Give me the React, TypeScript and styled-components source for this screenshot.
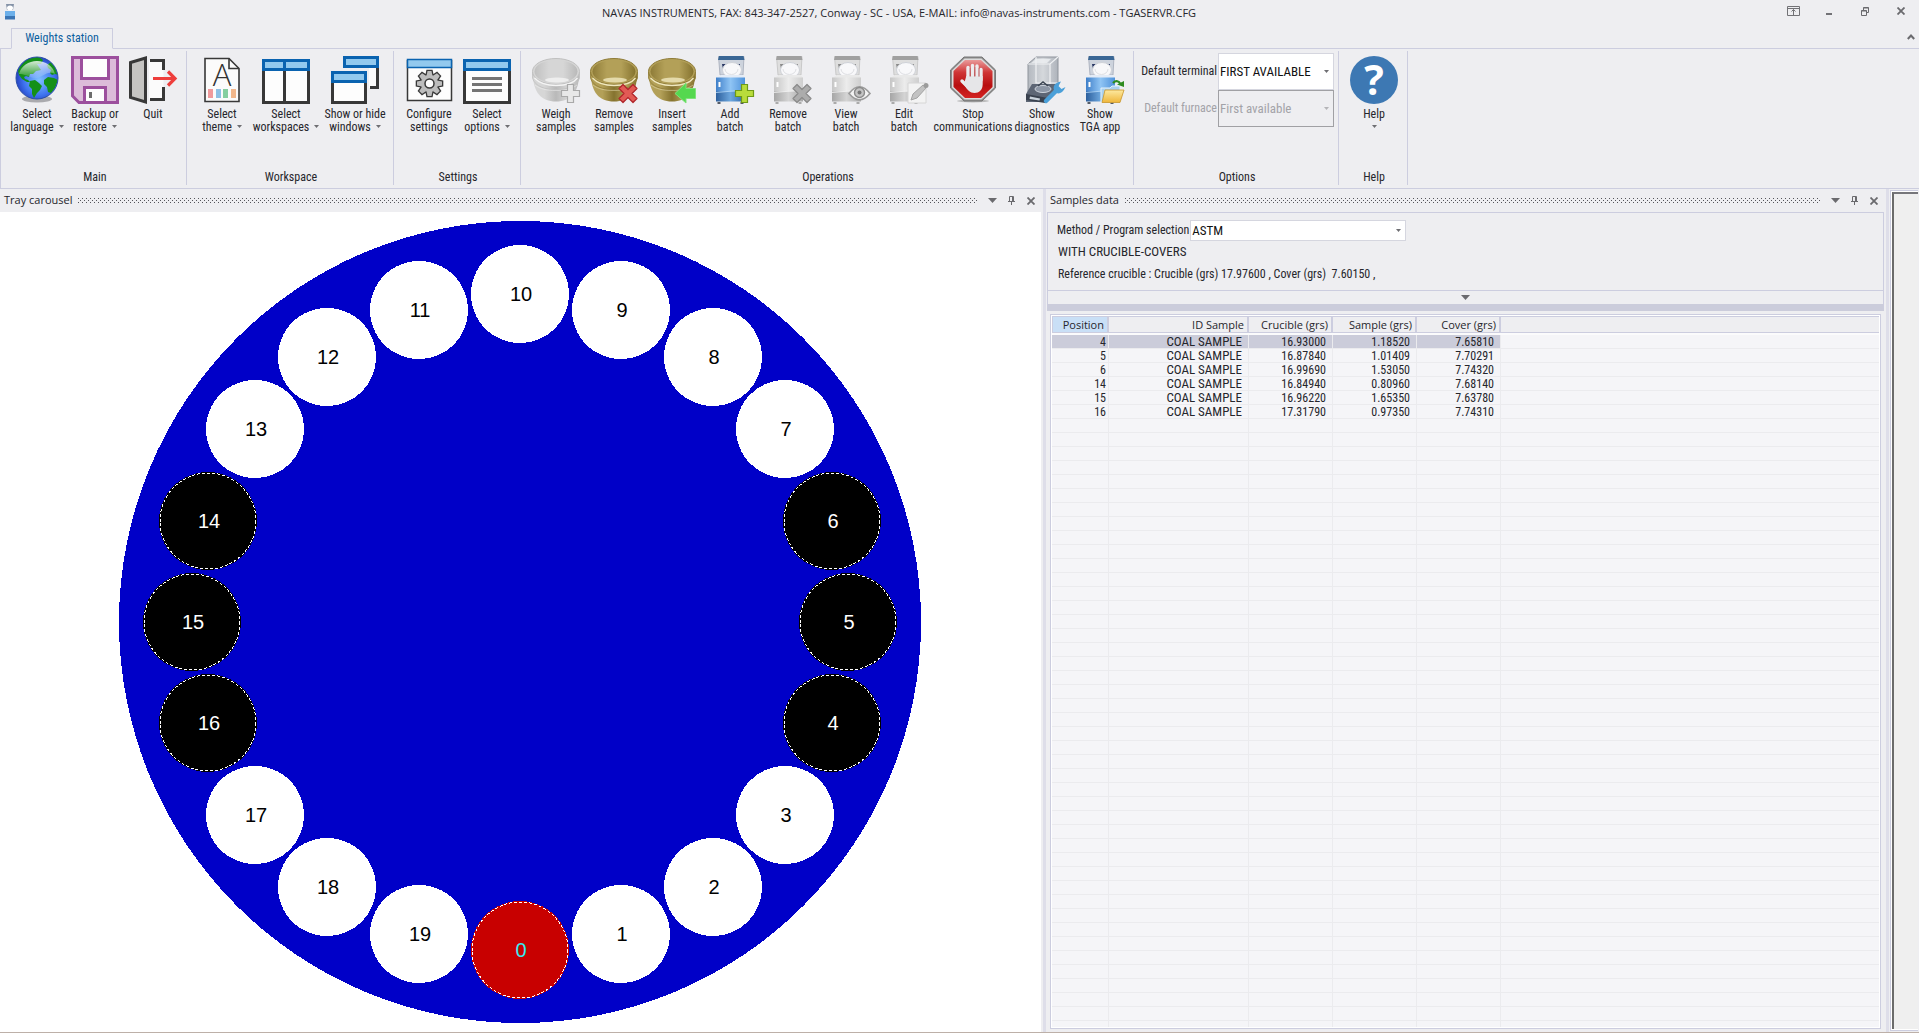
import React from 'react';
import styled, { createGlobalStyle, css } from 'styled-components';

const face = '#eeeef1';
const line = '#cccddf';
const ui = '"Roboto Condensed", "Liberation Sans Narrow", Roboto, sans-serif';
const caption = '"Open Sans", "Noto Sans", sans-serif';

const Global = createGlobalStyle`
  *, *::before, *::after { box-sizing: border-box; }
  body { margin: 0; background: ${face}; color: #26262c; font: 12px/13px ${ui}; }
  button, select { font: inherit; color: inherit; }
  button { border: 0; padding: 0; background: none; }
`;

/* ---------- frame ---------- */

const Window = styled.div`
  display: flex;
  flex-direction: column;
  height: 100vh;
  border-bottom: 1px solid #bdb0a8;
  overflow: hidden;
`;

const TitleBar = styled.header`
  display: flex;
  align-items: flex-start;
  height: 28px;
  padding-left: 5px;
`;

const AppMark = styled.svg`
  width: 10px;
  height: 16px;
  margin-top: 4px;
`;

const Title = styled.h1`
  flex: 1;
  margin: 0;
  padding-left: 8px;
  text-align: center;
  font: 11px/26px ${caption};
  white-space: nowrap;
`;

const CaptionButton = styled.button`
  display: grid;
  place-items: center;
  width: 36px;
  height: 22px;
`;

const TabRow = styled.nav`
  display: flex;
  align-items: flex-end;
  justify-content: space-between;
  height: 21px;
  padding: 0 2px 0 11px;
  box-shadow: inset 0 -1px ${line};
`;

const Tab = styled.button`
  height: 21px;
  width: 102px;
  border: 1px solid ${line};
  border-bottom-color: ${face};
  background: ${face};
  color: #0c5e9f;
`;

const CollapseButton = styled.button`
  display: grid;
  place-items: center;
  width: 12px;
  height: 20px;
  margin-bottom: 2px;
`;

/* ---------- ribbon ---------- */

const Ribbon = styled.section`
  display: flex;
  padding: 2px 0 3px 1px;
  border-left: 1px solid ${line};
  border-bottom: 1px solid ${line};
`;

const Group = styled.section`
  display: flex;
  flex-direction: column;
  height: 134px;
  padding: 0 4px 0 6px;
  border-right: 1px solid ${line};
`;

const GroupTools = styled.div`
  display: flex;
  flex: 1;
  align-items: flex-start;
`;

const GroupTitle = styled.h2`
  margin: 0;
  font: 12px/16px ${ui};
  text-align: center;
`;

const Tool = styled.button<{ $width?: number }>`
  display: flex;
  flex-direction: column;
  align-items: center;
  width: ${(p) => p.$width ?? 58}px;
  padding-top: 5px;
  white-space: nowrap;
`;

const Glyph = styled.svg`
  display: block;
  width: 48px;
  height: 48px;
  margin-bottom: 4px;
  overflow: visible;
`;

const Caret = styled.svg<{ $faded?: boolean; $below?: boolean }>`
  width: 5px;
  height: 3px;
  margin: ${(p) => (p.$below ? '4px 0 0' : '0 0 3px 5px')};
  fill: ${(p) => (p.$faded ? '#b4b4b8' : '#6e6e72')};
`;

const LabelLine = styled.span`
  display: block;
  height: 13px;
`;

const Fields = styled.div`
  padding-top: 2px;
`;

const Field = styled.div<{ $off?: boolean }>`
  display: flex;
  align-items: center;
  gap: 1px;
  color: ${(p) => (p.$off ? '#a3a3a8' : 'inherit')};
`;

const FieldLabel = styled.label`
  width: 77px;
  text-align: right;
  white-space: nowrap;
`;

const SelectBox = styled.div<{ $width: number }>`
  position: relative;
  width: ${(p) => p.$width}px;

  & > svg {
    position: absolute;
    right: 5px;
    top: 50%;
    margin: -2px 0 0;
    pointer-events: none;
  }
`;

const Select = styled.select<{ $height: number }>`
  display: block;
  width: 100%;
  height: ${(p) => p.$height}px;
  padding: 0 16px 0 1px;
  appearance: none;
  border: 1px solid #d5d6df;
  border-radius: 0;
  background: #fff;
  color: #111;
  font-size: 13px;

  &:disabled {
    border-color: #a0a0a4;
    background: ${face};
    color: #a3a3a8;
    opacity: 1;
  }
`;

/* ---------- docked panes ---------- */

const Docks = styled.main`
  flex: 1;
  min-height: 0;
  display: grid;
  grid-template-columns: 1043fr 3px 840fr 3px 30px;
`;

const Splitter = styled.div`
  background: #dedee9;
`;

const Pane = styled.section`
  display: flex;
  flex-direction: column;
  min-width: 0;
  min-height: 0;
`;

const PaneHeader = styled.header`
  display: flex;
  align-items: center;
  height: 23px;
  padding: 0 3px 0 4px;
`;

const PaneTitle = styled.h2`
  align-self: flex-start;
  margin: 0 6px 0 0;
  font: 11px/22px ${caption};
  white-space: nowrap;
`;

const dot = (x: number, y: number) =>
  `conic-gradient(at 1px 1px, transparent 270deg, #55555a 0) ${x}px ${y}px / 4px 4px`;

const Grip = styled.div`
  flex: 1;
  height: 5px;
  margin-right: 5px;
  background: ${dot(0, 0)}, ${dot(2, 2)};
`;

const PaneButton = styled.button`
  display: grid;
  place-items: center;
  width: 19px;
  height: 19px;
`;

const Canvas = styled.div`
  flex: 1;
  min-height: 0;
  margin-right: 2px;
  background: #fff;

  & > svg {
    display: block;
    width: 100%;
    height: 100%;
  }
`;

const disc = { empty: '#fff', loaded: '#000', home: '#c80000' };
const ink = { empty: '#000', loaded: '#fff', home: '#34ecf0' };
type SlotKind = keyof typeof disc;

const Plate = styled.circle`
  fill: #0000c8;
  shape-rendering: crispEdges;
`;

const Disc = styled.circle<{ $kind: SlotKind }>`
  fill: ${(p) => disc[p.$kind]};
  shape-rendering: crispEdges;
`;

const Rim = styled.circle`
  fill: none;
  stroke: #fff;
  stroke-dasharray: 3 2;
  shape-rendering: crispEdges;
`;

const SlotNumber = styled.text<{ $kind: SlotKind }>`
  fill: ${(p) => ink[p.$kind]};
  font: 20px "Liberation Sans", Arial, sans-serif;
  text-anchor: middle;
`;

/* ---------- samples ---------- */

const SamplesBody = styled.div`
  display: flex;
  flex-direction: column;
  flex: 1;
  min-height: 0;
  margin: 0 2px 0 1px;
`;

const MethodBox = styled.div`
  height: 79px;
  padding: 7px 9px 0;
  border: 1px solid ${line};
`;

const MethodRow = styled.div`
  display: flex;
  align-items: center;
  gap: 1px;
`;

const Note = styled.p<{ $large?: boolean }>`
  margin: 0;
  padding-left: 1px;
  line-height: 22px;
  white-space: pre;
  ${(p) => p.$large && css`font-size: 13px;`}
`;

const FoldBar = styled.button`
  display: grid;
  place-items: center;
  height: 20px;
  border: 1px solid ${line};
  border-top: 0;
  border-bottom: 7px solid #cbccdb;
`;

const Sheet = styled.div`
  flex: 1;
  min-height: 0;
  margin: 3px;
  padding: 1px;
  border: 1px solid ${line};
  background: #fff;
`;

const columns = [57, 140, 84, 84, 84];
const rule = (at: number) => `linear-gradient(#ebebee, #ebebee) ${at}px 17px / 1px 100% no-repeat`;
const rules = columns.map((_, i) => rule(columns.slice(0, i + 1).reduce((a, b) => a + b) - 1));

const GridArea = styled.div`
  height: 100%;
  background:
    ${rules.join(', ')},
    repeating-linear-gradient(transparent 0 13px, #ebebee 13px 14px) 0 19px no-repeat,
    #f5f5f8;
`;

const Grid = styled.table`
  width: 100%;
  table-layout: fixed;
  border-collapse: separate;
  border-spacing: 0;
`;

const Head = styled.th<{ $width?: number; $sorted?: boolean }>`
  width: ${(p) => (p.$width ? `${p.$width}px` : 'auto')};
  height: 17px;
  padding: 0 3px 0 0;
  border: 1px solid ${line};
  border-left: 0;
  border-right-width: ${(p) => (p.$width ? 2 : 0)}px;
  background: ${(p) => (p.$sorted ? '#c9dff6' : face)};
  font: 11px/15px ${caption};
  text-align: right;
  white-space: nowrap;

  &:first-child { border-left: 1px solid ${line}; }
`;

const Gap = styled.td`
  height: 2px;
  padding: 0;
  background: #fbfbfc;
`;

const Cell = styled.td<{ $text?: boolean }>`
  height: 14px;
  padding: 1px 6px 0 0;
  border-right: 1px solid #ebebee;
  border-bottom: 1px solid #ebebee;
  font-size: ${(p) => (p.$text ? 13 : 12)}px;
  line-height: 12px;
  text-align: right;
  white-space: nowrap;

  &:first-child { padding-right: 2px; }
`;

const Row = styled.tr<{ $selected: boolean }>`
  ${Cell} { background: ${(p) => (p.$selected ? '#cbccda' : 'transparent')}; }
`;

const EmptyDock = styled.aside`
  margin: 1px;
  border: 1px solid ${line};
  border-right: 0;
  padding: 1px 0 1px 1px;
  background: #fff;

  &::before {
    content: '';
    display: block;
    height: 100%;
    border: 2px solid #6b6b6b;
    border-top-color: #76767a;
    border-right: 0;
    border-bottom: 0;
    background: #efefef;
  }
`;

/* ---------- drawings ---------- */

const Gradient = ({ id, stops, flat }: { id: string; stops: string[]; flat?: boolean }) => (
  <linearGradient id={id} x1="0" y1="0" x2={flat ? 1 : 0} y2={flat ? 0 : 1}>
    {stops.map((c, i) => (
      <stop key={i} offset={i / (stops.length - 1)} stopColor={c} />
    ))}
  </linearGradient>
);

const GlobeArt = () => (
  <>
    <defs>
      <radialGradient id="sea" cx="0.55" cy="0.55" r="0.6">
        <stop offset="0" stopColor="#7fc0ff" />
        <stop offset="0.6" stopColor="#3f74f0" />
        <stop offset="1" stopColor="#1f35b4" />
      </radialGradient>
      <Gradient id="gloss" stops={['#ffffffd0', '#ffffff10']} />
      <clipPath id="ball"><circle cx="24" cy="22" r="20.5" /></clipPath>
    </defs>
    <ellipse cx="24" cy="43" rx="15" ry="3.5" fill="#8d8d92" opacity="0.7" />
    <circle cx="24" cy="22" r="21" fill="url(#sea)" stroke="#2a4ea8" />
    <g clipPath="url(#ball)" fill="#149018">
      <path d="M7 11l5-6 7-4 7 0 4 3-2 4-4 0 2 3 2 3-5 1-3 3-3 0-1 3-3-1-2 1 1 2 3 1 2 2-3 0-5-3-3-4-1-4z" />
      <path d="M17 25l5-1 4 3 3 3-2 4-3 3-3 5-2-4 0-5-3-3z" />
      <path d="M34 9l4-3 6 6 2 7-4-1-3 1-2-2 1-3-3-2z" />
      <path d="M31 24l4-3 6 1 4 2-3 8-4 5-3-1-1-5-3-3z" />
    </g>
    <path d="M6 18a18.5 17 0 0 1 36 0c-8-5-14 6-22 4-6-2-9-4-14-4z" fill="url(#gloss)" />
  </>
);

const FloppyArt = () => (
  <>
    <path d="M1.5 1.5H46.5V46.5H8L1.5 40z" fill="#dcbcd9" stroke="#9c4f9d" strokeWidth="3" />
    <path d="M10.5 1.5H37.5V22.5H10.5z" fill="#fdfdfd" stroke="#9c4f9d" strokeWidth="3" />
    <path d="M13.5 46.5V31.5H34.5V46.5z" fill="#fdfdfd" stroke="#9c4f9d" strokeWidth="3" />
    <path d="M18 36h3v6h-3z" fill="#6b6b6b" />
  </>
);

const ExitArt = () => (
  <>
    <path d="M20 4.5H34.5V43.5H20z" fill="#fbfbfb" />
    <path d="M21 4.5H34.5V14M34.5 31V43.5H21" fill="none" stroke="#383838" strokeWidth="3" />
    <path d="M1.5 6.5L16.5 2V46L1.5 41.5z" fill="#c5c4c2" stroke="#383838" strokeWidth="3" />
    <path d="M24 22.5H45M39 15.5L46 22.5L39 29.5" fill="none" stroke="#ee3e3c" strokeWidth="3.2" />
  </>
);

const ThemeArt = () => (
  <>
    <path d="M7 2.5H31L41 12.5V45.5H7z" fill="#fbfbfb" stroke="#383838" strokeWidth="1.6" />
    <path d="M31 2.5V12.5H41" fill="none" stroke="#383838" strokeWidth="1.6" />
    <text x="24" y="30" fontSize="31" fontWeight="300" fontFamily="Open Sans, Roboto, sans-serif" textAnchor="middle" fill="#333">A</text>
    <path d="M10 33h5v9h-5z" fill="#f09a9c" />
    <path d="M18 33h5v9h-5z" fill="#8dc0e4" />
    <path d="M25 33h5v9h-5z" fill="#85cfa0" />
    <path d="M33 33h5v9h-5z" fill="#f2b78b" />
  </>
);

const WorkspaceArt = () => (
  <>
    <path d="M1.5 13V46.5H46.5V13M22.5 13V46.5" fill="#fdfdfd" stroke="#383838" strokeWidth="3" />
    <path d="M1.5 4.5H46.5V13.5H1.5zM22.5 4.5V13.5" fill="#92c9ee" stroke="#0a63b0" strokeWidth="3" />
  </>
);

const WindowsArt = () => (
  <>
    <path d="M38 12H45V32H38z" fill="#fbfbfb" />
    <path d="M46.5 12V31.5H39" fill="none" stroke="#383838" strokeWidth="3" />
    <path d="M13.5 1.5H46.5V10.5H13.5z" fill="#92c9ee" stroke="#0a63b0" strokeWidth="3" />
    <path d="M1.5 25V46.5H34.5V25" fill="#fdfdfd" stroke="#383838" strokeWidth="3" />
    <path d="M1.5 16.5H34.5V25.5H1.5z" fill="#92c9ee" stroke="#0a63b0" strokeWidth="3" />
  </>
);

const teeth = [0, 45, 90, 135, 180, 225, 270, 315];

const GearShape = () => (
  <>
    {teeth.map((a) => (
      <path key={a} d="M21.5 20l1-5h4l1 5z" transform={`rotate(${a} 24.5 27.5)`} />
    ))}
    <circle cx="24.5" cy="27.5" r="8.5" />
  </>
);

const ConfigureArt = () => (
  <>
    <path d="M2.5 4V44.5H46.5V4" fill="#fdfdfd" stroke="#383838" strokeWidth="1.5" />
    <path d="M2.5 3.5H46.5V11.5H2.5z" fill="#92c9ee" stroke="#0a63b0" strokeWidth="1.5" />
    <g fill="#bdbdbd" stroke="#383838" strokeWidth="2.6"><GearShape /></g>
    <g fill="#bdbdbd"><GearShape /></g>
    <circle cx="24.5" cy="27.5" r="4.5" fill="#fdfdfd" stroke="#383838" strokeWidth="1.5" />
  </>
);

const ListArt = () => (
  <>
    <path d="M1.5 13V46.5H46.5V13" fill="#fdfdfd" stroke="#383838" strokeWidth="3" />
    <path d="M1.5 4.5H46.5V13.5H1.5z" fill="#92c9ee" stroke="#0a63b0" strokeWidth="3" />
    <path d="M9 22.5H39M9 28.5H39M9 34.5H39" stroke="#747474" strokeWidth="2.8" />
  </>
);

const Crucible = ({ gray }: { gray?: boolean }) => {
  const id = gray ? 'potGray' : 'potGold';
  const c = gray
    ? { edge: '#c0c0c0', dark: '#b9b9b9', mid: '#d6d6d6', hi: '#f4f4f4' }
    : { edge: '#8f7c38', dark: '#85732f', mid: '#b3a058', hi: '#f0e8bf' };
  return (
    <>
      <defs>
        <Gradient id={id} flat stops={[c.mid, c.mid, c.dark, c.mid, c.dark]} />
        <Gradient id={`${id}In`} flat stops={[c.edge, c.mid, c.mid, c.dark]} />
      </defs>
      <path d="M1 18C1 36 9 45.5 24 45.5S47 36 47 18z" fill={`url(#${id})`} />
      <path d="M.5 16v6C3 31 14 33.5 24 33.5S45 31 47.5 22v-6z" fill={`url(#${id})`} stroke={c.edge} strokeWidth=".8" />
      <ellipse cx="24" cy="15.5" rx="23.5" ry="13" fill={c.mid} stroke={c.edge} />
      <ellipse cx="24" cy="15.5" rx="21.5" ry="11.5" fill={`url(#${id}In)`} />
      <ellipse cx="25" cy="24" rx="12" ry="2.5" fill={c.hi} opacity=".8" />
      <path d="M2.5 22C8 28 15 29.5 24 29.5S41 28 45.5 22" fill="none" stroke={c.hi} strokeWidth="1.3" />
      <path d="M3 29C8 33 15 34.5 24 34.5S40 33 45 29" fill="none" stroke={c.hi} strokeWidth=".8" opacity=".6" />
    </>
  );
};

const Plus = ({ fill, edge }: { fill: string; edge: string }) => (
  <path d="M35.5 28.5h6v6h6v6h-6v6h-6v-6h-6v-6h6z" fill={fill} stroke={edge} strokeWidth="1.2" />
);

const Cross = ({ fill, edge }: { fill: string; edge: string }) => (
  <path d="M33 28.5l5 5 5-5 4 4-5 5 5 5-4 4-5-5-5 5-4-4 5-5-5-5z" fill={fill} stroke={edge} strokeWidth="1.2" strokeLinejoin="round" />
);

const WeighArt = () => <><Crucible gray /><Plus fill="#e8e8e8" edge="#a9a9a9" /></>;
const RemoveArt = () => <><Crucible /><Cross fill="#e25a55" edge="#b0252a" /></>;
const InsertArt = () => (
  <>
    <Crucible />
    <path d="M27 37.5L38 27v5.5h9.5v10H38V47z" fill="#55d84f" stroke="#7fe27b" strokeWidth="1" />
  </>
);

const Furnace = ({ gray }: { gray?: boolean }) => {
  const id = gray ? 'fGray' : 'fBlue';
  return (
    <>
      <defs>
        <Gradient id={id} flat stops={gray ? ['#c6c6c6', '#ececec', '#cecece'] : ['#3f7fc9', '#8fc4f4', '#4f92da']} />
        <Gradient id={`${id}Low`} flat stops={gray ? ['#a6a6a6', '#d4d4d4', '#a8a8a8'] : ['#2c5f9d', '#6da7de', '#2e66a8']} />
      </defs>
      <path d="M12.5 .5H38L37 19H14z" fill={gray ? '#dedede' : '#cdd3dd'} stroke={gray ? '#c2c2c2' : '#a3a9b8'} strokeWidth=".8" />
      <path d="M13 0H37.5L38.5 4H12z" fill={gray ? '#a0a0a0' : '#3a6795'} />
      <path d="M16 8h18l-1.5 8h-15z" fill={gray ? '#8c8c8c' : '#2c3a66'} />
      <ellipse cx="26" cy="14" rx="9.5" ry="7.5" fill="#f8f8fa" stroke="#cfd2d8" />
      <path d="M19 13a6.5 5.5 0 1 0 13 0" fill="none" stroke="#dedfe3" />
      <path d="M10 22L15 19H37L39 22z" fill={gray ? '#e9e9e9' : '#e3ebf6'} />
      <path d="M10 21.5H39V36H10z" fill={`url(#${id})`} />
      <path d="M10 35.5H39V45.5H10z" fill={`url(#${id}Low)`} />
      <path d="M10 36.5L39 34" stroke={gray ? '#f4f4f4' : '#b8dbfa'} strokeWidth=".8" />
      <path d="M12.5 26h2v5h-2z" fill="#fff" />
      <path d="M11.5 46h3v2h-3zM34.5 46h3v2h-3z" fill={gray ? '#aaa' : '#555b66'} />
    </>
  );
};

const AddBatchArt = () => <><Furnace /><Plus fill="#b9dc3c" edge="#6f9a16" /></>;
const RemoveBatchArt = () => <><Furnace gray /><Cross fill="#acacac" edge="#8a8a8a" /></>;
const ViewBatchArt = () => (
  <>
    <Furnace gray />
    <path d="M27 37.5Q37.5 24 48 37.5Q37.5 50 27 37.5z" fill="#f4f4f4" stroke="#9b9b9b" strokeWidth="1.6" />
    <circle cx="37.5" cy="36.5" r="5" fill="#c4c4c4" stroke="#8b8b8b" strokeWidth="1.4" />
    <circle cx="37.5" cy="36.5" r="2" fill="#777" />
  </>
);
const EditBatchArt = () => (
  <>
    <Furnace gray />
    <path d="M28 27H46V47H28z" fill="#f3f3f3" stroke="#d6d6d6" />
    <path d="M31 44l2-6 10-9 3 3-9 10z" fill="#c2c2c2" stroke="#a3a3a3" />
    <circle cx="46" cy="29.5" r="2.5" fill="#9b9b9b" />
  </>
);

const StopArt = () => (
  <>
    <defs><Gradient id="stop" stops={['#e99a9a', '#cf3535', '#b80f10', '#d32322']} /></defs>
    <ellipse cx="24" cy="45" rx="16" ry="1.5" fill="#999" opacity=".6" />
    <path d="M15 1H33L46.5 14V32L33 45H15L1.5 32V14z" fill="#8c8c8c" stroke="#777" />
    <path d="M15.5 2.5H32.5L45 14.5V31.5L32.5 43.5H15.5L3 31.5V14.5z" fill="#dcdcdc" />
    <path d="M16 4H32L43.5 15V31L32 42H16L4.5 31V15z" fill="url(#stop)" />
    <path
      d="M19 24V11.5M23.5 22V9.5M28 22V10M32 24V13.5M19 31L13 25"
      fill="none"
      stroke="#ececee"
      strokeWidth="3.4"
      strokeLinecap="round"
    />
    <path d="M17.3 20H33.7V28C33.7 34 30 37 25.5 37S18 34 15 28z" fill="#e6e6e8" />
    <path d="M21.2 12v9M25.8 11v10M30 12v9" stroke="#b4686a" strokeWidth=".7" />
  </>
);

const BalanceArt = () => (
  <>
    <defs><Gradient id="glass" flat stops={['#b4b9c0', '#d5d8dc', '#aeb3bb']} /></defs>
    <path d="M10 8L18 1H40V30L33 38H10z" fill="url(#glass)" stroke="#8f949c" />
    <path d="M10 8H32L40 1M32 8V36M18 1V27H40" fill="none" stroke="#f0f2f4" strokeWidth="1.2" />
    <path d="M13 7L18 3H33L29 7z" fill="#eef0f2" opacity=".8" />
    <path d="M8 38L14 28H38L34 40L28 46H8z" fill="#5d6675" />
    <ellipse cx="25" cy="33" rx="8" ry="3.5" fill="#8d97a6" stroke="#cfd5dd" />
    <path d="M20 30L25 26L30 30" fill="none" stroke="#3b4452" strokeWidth="1.5" />
    <path d="M8 38L30 42L27 47L8 44z" fill="#39414e" />
    <path d="M12 40.5L22 42.5L21.5 44.5L11.5 43z" fill="#c9d3dc" />
    <path d="M28 45L39 34" stroke="#4ba0d9" strokeWidth="4.5" strokeLinecap="round" />
    <path d="M43 25.5C37 26 34 31 36.5 35S44 38.5 47.5 31L43.5 33L40.5 30z" fill="#4ba0d9" />
  </>
);

const TgaArt = () => (
  <>
    <defs><Gradient id="folder" stops={['#fde9a0', '#efb63a']} /></defs>
    <Furnace />
    <path d="M25 32H34l2-2h8v16H25z" fill="#a9d0ee" stroke="#e3f1fb" />
    <path d="M29 34H48L44 46.5H26z" fill="url(#folder)" stroke="#c9952a" strokeWidth=".8" />
    <path d="M37 27C40 24 43 25 44.5 28" fill="none" stroke="#2e8b1f" strokeWidth="2.2" />
    <path d="M41 28.5L48 25V31z" fill="#2e8b1f" />
  </>
);

const HelpArt = () => (
  <>
    <circle cx="24" cy="24" r="24" fill="#3d78b3" />
    <text x="24" y="39" fontSize="41" fontWeight="700" fontFamily="Open Sans, sans-serif" textAnchor="middle" fill="#fff">?</text>
  </>
);

/* ---------- pieces ---------- */

const Arrow = ({ faded, below }: { faded?: boolean; below?: boolean }) => (
  <Caret $faded={faded} $below={below} viewBox="0 0 5 3" aria-hidden="true"><path d="M0 0H5L2.5 3z" /></Caret>
);

type ToolSpec = { art: () => React.ReactElement; lines: string[]; menu?: boolean; width?: number };

const ToolButton = ({ art: Art, lines, menu, width }: ToolSpec) => (
  <Tool type="button" $width={width}>
    <Glyph viewBox="0 0 48 48" aria-hidden="true"><Art /></Glyph>
    {lines.map((text, i) => (
      <LabelLine key={text}>
        {text}
        {menu && lines.length > 1 && i === lines.length - 1 && <Arrow />}
      </LabelLine>
    ))}
    {menu && lines.length === 1 && <Arrow below />}
  </Tool>
);

const groups: { title: string; tools: ToolSpec[] }[] = [
  {
    title: 'Main',
    tools: [
      { art: GlobeArt, lines: ['Select', 'language'], menu: true },
      { art: FloppyArt, lines: ['Backup or', 'restore'], menu: true },
      { art: ExitArt, lines: ['Quit'] },
    ],
  },
  {
    title: 'Workspace',
    tools: [
      { art: ThemeArt, lines: ['Select', 'theme'], menu: true },
      { art: WorkspaceArt, lines: ['Select', 'workspaces'], menu: true, width: 70 },
      { art: WindowsArt, lines: ['Show or hide', 'windows'], menu: true, width: 68 },
    ],
  },
  {
    title: 'Settings',
    tools: [
      { art: ConfigureArt, lines: ['Configure', 'settings'] },
      { art: ListArt, lines: ['Select', 'options'], menu: true },
    ],
  },
  {
    title: 'Operations',
    tools: [
      { art: WeighArt, lines: ['Weigh', 'samples'] },
      { art: RemoveArt, lines: ['Remove', 'samples'] },
      { art: InsertArt, lines: ['Insert', 'samples'] },
      { art: AddBatchArt, lines: ['Add', 'batch'] },
      { art: RemoveBatchArt, lines: ['Remove', 'batch'] },
      { art: ViewBatchArt, lines: ['View', 'batch'] },
      { art: EditBatchArt, lines: ['Edit', 'batch'] },
      { art: StopArt, lines: ['Stop', 'communications'], width: 80 },
      { art: BalanceArt, lines: ['Show', 'diagnostics'] },
      { art: TgaArt, lines: ['Show', 'TGA app'] },
    ],
  },
];

const RibbonGroup = ({ title, children }: { title: string; children: React.ReactNode }) => (
  <Group>
    <GroupTools>{children}</GroupTools>
    <GroupTitle>{title}</GroupTitle>
  </Group>
);

const CloseMark = () => (
  <svg width="8" height="8" viewBox="0 0 8 8" aria-hidden="true">
    <path d="M.5 .5L7.5 7.5M7.5 .5L.5 7.5" stroke="#6a6a6e" strokeWidth="1.8" />
  </svg>
);

const DownMark = () => (
  <svg width="9" height="5" viewBox="0 0 9 5" aria-hidden="true"><path d="M0 0H9L4.5 5z" fill="#6a6a6e" /></svg>
);

const DockHeader = ({ title }: { title: string }) => (
  <PaneHeader>
    <PaneTitle>{title}</PaneTitle>
    <Grip />
    <PaneButton type="button" aria-label="Pane menu"><DownMark /></PaneButton>
    <PaneButton type="button" aria-label="Auto hide">
      <svg width="7" height="9" viewBox="0 0 7 9" aria-hidden="true">
        <path d="M1.5 5V.5H5.5V5M0 5.5H7M3.5 5.5V9M4.5 0V5" fill="none" stroke="#6a6a6e" />
      </svg>
    </PaneButton>
    <PaneButton type="button" aria-label="Close pane"><CloseMark /></PaneButton>
  </PaneHeader>
);

const loaded = [4, 5, 6, 14, 15, 16];
const slots = Array.from({ length: 20 }, (_, n) => {
  const angle = (n * Math.PI) / 10;
  const kind: SlotKind = n === 0 ? 'home' : loaded.includes(n) ? 'loaded' : 'empty';
  return { n, kind, x: Math.round(328 * Math.sin(angle)), y: Math.round(328 * Math.cos(angle)) };
});

const Carousel = () => (
  <svg viewBox="-520 -410 1041 820" role="img" aria-label="Tray carousel">
    <Plate r="401" />
    {slots.map(({ n, kind, x, y }) => (
      <g key={n} transform={`translate(${x} ${y})`}>
        <Disc r="49" $kind={kind} />
        {kind !== 'empty' && <Rim r="48" />}
        <SlotNumber x="1" y="7" $kind={kind}>{n}</SlotNumber>
      </g>
    ))}
  </svg>
);

const heads = ['Position', 'ID Sample', 'Crucible (grs)', 'Sample (grs)', 'Cover (grs)'];
const samples = [
  ['4', 'COAL SAMPLE', '16.93000', '1.18520', '7.65810'],
  ['5', 'COAL SAMPLE', '16.87840', '1.01409', '7.70291'],
  ['6', 'COAL SAMPLE', '16.99690', '1.53050', '7.74320'],
  ['14', 'COAL SAMPLE', '16.84940', '0.80960', '7.68140'],
  ['15', 'COAL SAMPLE', '16.96220', '1.65350', '7.63780'],
  ['16', 'COAL SAMPLE', '17.31790', '0.97350', '7.74310'],
];

export default function App() {
  return (
    <Window>
      <Global />
      <TitleBar>
        <AppMark viewBox="0 0 10 16" aria-hidden="true">
          <path d="M1 0H9L8 6H2z" fill="#8593a8" />
          <ellipse cx="5" cy="4" rx="3" ry="2.5" fill="#fff" />
          <path d="M0 7H10V15H0z" fill="#6db0ea" />
          <path d="M0 12H10V15.5H0z" fill="#3b75b4" />
        </AppMark>
        <Title>
          NAVAS INSTRUMENTS, FAX: 843-347-2527, Conway - SC - USA, E-MAIL: info@navas-instruments.com - TGASERVR.CFG
        </Title>
        <CaptionButton type="button" aria-label="Ribbon display options">
          <svg width="13" height="10" viewBox="0 0 13 10">
            <path d="M.5 .5H12.5V9.5H.5zM.5 2.5H12.5M6.5 3.5V9M4.5 5.5L6.5 3.5L8.5 5.5" fill="none" stroke="#727276" />
          </svg>
        </CaptionButton>
        <CaptionButton type="button" aria-label="Minimize">
          <svg width="6" height="8" viewBox="0 0 6 8"><path d="M0 6H6V8H0z" fill="#727276" /></svg>
        </CaptionButton>
        <CaptionButton type="button" aria-label="Restore">
          <svg width="8" height="9" viewBox="0 0 8 9">
            <path d="M2.5 3V.5H7.5V5.5H6M2.5 1H7.5M.5 3.5H5.5V8.5H.5zM.5 4H5.5" fill="none" stroke="#6a6a6e" />
          </svg>
        </CaptionButton>
        <CaptionButton type="button" aria-label="Close"><CloseMark /></CaptionButton>
      </TitleBar>

      <TabRow>
        <Tab type="button">Weights station</Tab>
        <CollapseButton type="button" aria-label="Collapse ribbon">
          <svg width="8" height="6" viewBox="0 0 8 6"><path d="M.8 5L4 1.5L7.2 5" fill="none" stroke="#6a6a6e" strokeWidth="2" /></svg>
        </CollapseButton>
      </TabRow>

      <Ribbon>
        {groups.map((g) => (
          <RibbonGroup key={g.title} title={g.title}>
            {g.tools.map((t) => <ToolButton key={t.lines.join(' ')} {...t} />)}
          </RibbonGroup>
        ))}
        <RibbonGroup title="Options">
          <Fields>
            <Field>
              <FieldLabel htmlFor="terminal">Default terminal</FieldLabel>
              <SelectBox $width={116}>
                <Select id="terminal" $height={37} defaultValue="first">
                  <option value="first">FIRST AVAILABLE</option>
                </Select>
                <Arrow />
              </SelectBox>
            </Field>
            <Field $off>
              <FieldLabel htmlFor="furnace">Default furnace</FieldLabel>
              <SelectBox $width={116}>
                <Select id="furnace" $height={37} disabled defaultValue="first">
                  <option value="first">First available</option>
                </Select>
                <Arrow faded />
              </SelectBox>
            </Field>
          </Fields>
        </RibbonGroup>
        <RibbonGroup title="Help">
          <ToolButton art={HelpArt} lines={['Help']} menu />
        </RibbonGroup>
      </Ribbon>

      <Docks>
        <Pane>
          <DockHeader title="Tray carousel" />
          <Canvas><Carousel /></Canvas>
        </Pane>
        <Splitter />
        <Pane>
          <DockHeader title="Samples data" />
          <SamplesBody>
            <MethodBox>
              <MethodRow>
                <label htmlFor="method">Method / Program selection</label>
                <SelectBox $width={216}>
                  <Select id="method" $height={21} defaultValue="ASTM">
                    <option>ASTM</option>
                  </Select>
                  <Arrow />
                </SelectBox>
              </MethodRow>
              <Note $large>WITH CRUCIBLE-COVERS</Note>
              <Note>{'Reference crucible : Crucible (grs) 17.97600 , Cover (grs)  7.60150 ,'}</Note>
            </MethodBox>
            <FoldBar type="button" aria-label="Show more"><DownMark /></FoldBar>
            <Sheet>
              <GridArea>
                <Grid>
                  <thead>
                    <tr>
                      {heads.map((h, i) => (
                        <Head key={h} scope="col" $width={columns[i]} $sorted={i === 0}>{h}</Head>
                      ))}
                      <Head aria-hidden="true" />
                    </tr>
                  </thead>
                  <tbody>
                    <tr aria-hidden="true"><Gap colSpan={6} /></tr>
                    {samples.map((cells, r) => (
                      <Row key={cells[0]} $selected={r === 0}>
                        {cells.map((c, i) => <Cell key={i} $text={i === 1}>{c}</Cell>)}
                      </Row>
                    ))}
                  </tbody>
                </Grid>
              </GridArea>
            </Sheet>
          </SamplesBody>
        </Pane>
        <Splitter />
        <EmptyDock />
      </Docks>
    </Window>
  );
}
